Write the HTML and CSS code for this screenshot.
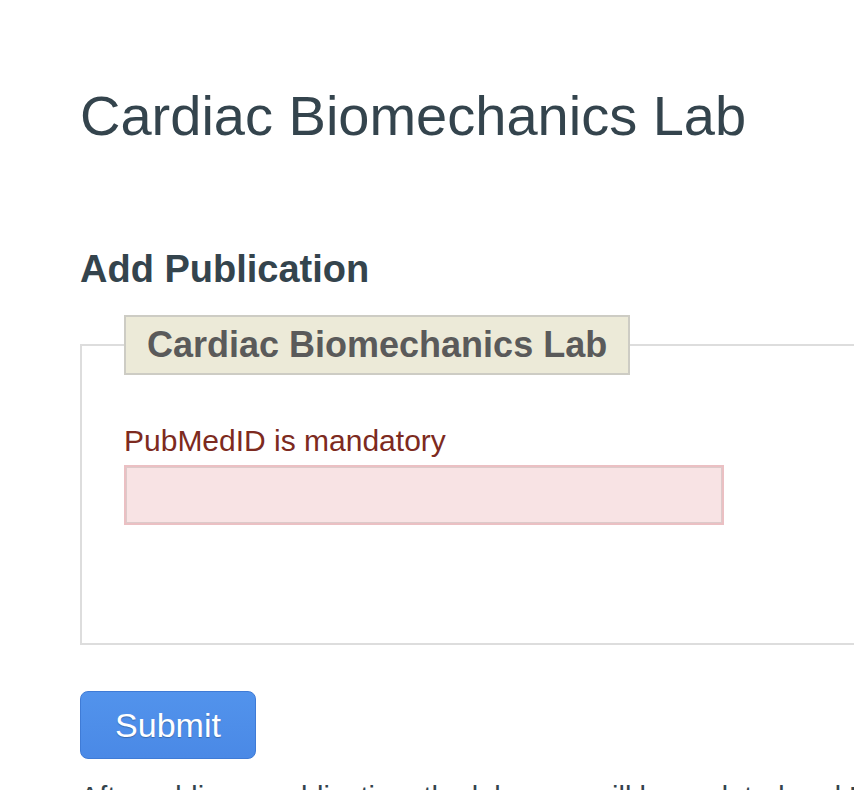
FILE: index.html
```html
<!DOCTYPE html>
<html lang="en">
<head>
<meta charset="utf-8">
<title>Cardiac Biomechanics Lab</title>
<link rel="stylesheet" href="styles.css">
</head>
<body>
<main class="page">
  <h1 class="site-title">Cardiac Biomechanics Lab</h1>
  <h2 class="section-title">Add Publication</h2>
  <form class="pub-form">
    <fieldset class="lab-fieldset">
      <legend class="lab-legend">Cardiac Biomechanics Lab</legend>
      <label class="error-label" for="pmid">PubMedID is mandatory</label>
      <input class="error-input" id="pmid" type="text">
    </fieldset>
    <button class="submit-btn" type="submit">Submit</button>
  </form>
  <p class="note">After adding a publication, the lab page will be updated and M</p>
</main>
</body>
</html>
```
FILE: styles.css
```css
html {
  overflow: hidden;
}
body {
  margin: 0;
  background: #ffffff;
  font-family: "Liberation Sans", Arial, Helvetica, sans-serif;
  color: #34444d;
}
.page {
  padding: 85px 0 0 80px;
}
.site-title {
  margin: 0;
  font-size: 56px;
  font-weight: 400;
  line-height: 1.1;
  color: #34444d;
}
.section-title {
  margin: 102px 0 0;
  font-size: 38px;
  font-weight: 700;
  line-height: 1.1;
  color: #34444d;
}
.pub-form {
  margin: 25px 0 0;
}
.lab-fieldset {
  margin: 0;
  width: 860px;
  padding: 48px 42px 118px;
  border: 2px solid #dddddd;
  box-sizing: content-box;
  display: flex;
  flex-direction: column;
  align-items: flex-start;
}
.lab-legend {
  padding: 0 21px;
  font-size: 36px;
  line-height: 56px;
  font-weight: 700;
  color: #5a5a5a;
  background: #ecead8;
  border: 2px solid #cdccc4;
}
.error-label {
  font-size: 30px;
  line-height: 1.2;
  color: #7d2a20;
}
.error-input {
  margin-top: 6px;
  width: 600px;
  height: 60px;
  box-sizing: border-box;
  background: #f8e3e4;
  border: 2px solid #ebc0c3;
  box-shadow: inset 0 0 0 1px #dccaca;
  font-size: 24px;
  padding: 0 10px;
  outline: none;
}
.submit-btn {
  display: block;
  margin-top: 46px;
  width: 176px;
  height: 68px;
  box-sizing: border-box;
  border: 1px solid #3f7bd6;
  border-radius: 8px;
  background: linear-gradient(#5293ec, #4a89e6);
  color: #ffffff;
  font-family: "Liberation Sans", Arial, Helvetica, sans-serif;
  font-size: 34px;
  text-shadow: 0 1px 1px rgba(0, 0, 0, 0.25);
  padding: 0;
  cursor: pointer;
}
.note {
  margin: 18px 0 0;
  font-size: 29px;
  line-height: 1.4;
  color: #34444d;
  white-space: nowrap;
}
```
